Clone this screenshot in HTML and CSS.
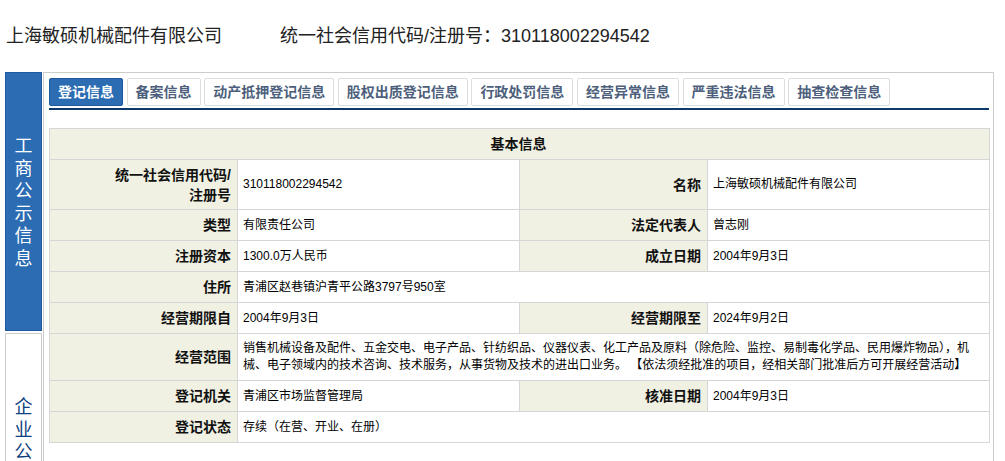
FILE: index.html
```html
<!DOCTYPE html>
<html lang="zh-CN">
<head>
  <meta charset="UTF-8">
  <title>企业信用信息公示</title>
  <link rel="stylesheet" href="styles.css">
</head>
<body>
  <header class="top">
    <span class="company">上海敏硕机械配件有限公司</span>
    <span class="credit">统一社会信用代码/注册号：310118002294542</span>
  </header>

  <div class="wrap">
    <!-- left side menu -->
    <aside class="side">
      <div class="side-item active">工<br>商<br>公<br>示<br>信<br>息</div>
      <div class="side-item">企<br>业<br>公<br>示<br>信<br>息</div>
    </aside>

    <main class="panel">
      <ul class="tabs">
        <li class="tab current">登记信息</li>
        <li class="tab">备案信息</li>
        <li class="tab">动产抵押登记信息</li>
        <li class="tab">股权出质登记信息</li>
        <li class="tab">行政处罚信息</li>
        <li class="tab">经营异常信息</li>
        <li class="tab">严重违法信息</li>
        <li class="tab">抽查检查信息</li>
      </ul>

      <table class="info">
        <colgroup>
          <col class="c-label"><col class="c-value"><col class="c-label"><col class="c-value">
        </colgroup>
        <tr><th colspan="4" class="caption">基本信息</th></tr>
        <tr class="tall">
          <th>统一社会信用代码/<br>注册号</th><td>310118002294542</td>
          <th>名称</th><td>上海敏硕机械配件有限公司</td>
        </tr>
        <tr>
          <th>类型</th><td>有限责任公司</td>
          <th>法定代表人</th><td>曾志刚</td>
        </tr>
        <tr>
          <th>注册资本</th><td>1300.0万人民币</td>
          <th>成立日期</th><td>2004年9月3日</td>
        </tr>
        <tr>
          <th>住所</th><td colspan="3">青浦区赵巷镇沪青平公路3797号950室</td>
        </tr>
        <tr>
          <th>经营期限自</th><td>2004年9月3日</td>
          <th>经营期限至</th><td>2024年9月2日</td>
        </tr>
        <tr class="scope">
          <th>经营范围</th>
          <td colspan="3">销售机械设备及配件、五金交电、电子产品、针纺织品、仪器仪表、化工产品及原料（除危险、监控、易制毒化学品、民用爆炸物品），机械、电子领域内的技术咨询、技术服务，从事货物及技术的进出口业务。 【依法须经批准的项目，经相关部门批准后方可开展经营活动】</td>
        </tr>
        <tr>
          <th>登记机关</th><td>青浦区市场监督管理局</td>
          <th>核准日期</th><td>2004年9月3日</td>
        </tr>
        <tr>
          <th>登记状态</th><td colspan="3">存续（在营、开业、在册）</td>
        </tr>
      </table>
    </main>
  </div>
</body>
</html>
```

FILE: styles.css
```css
/* page */
body {
  margin: 0;
  font-family: "Liberation Sans", "Noto Sans CJK SC", sans-serif;
  background: #fff;
  color: #000;
}

.top {
  height: 72px;
  display: flex;
  align-items: center;
  padding: 0 0 4px 6px;
  box-sizing: border-box;
  font-size: 18px;
  color: #222;
}

.credit {
  margin-left: 58px;
}

.wrap {
  display: flex;
  padding-left: 5px;
}

/* left menu */
.side {
  width: 37px;
  flex-shrink: 0;
  margin-right: 1px;
}

.side-item {
  height: 259px;
  box-sizing: border-box;
  border: 1px solid #ccc;
  display: flex;
  align-items: center;
  justify-content: center;
  text-align: center;
  font-size: 18px;
  line-height: 22.5px;
  color: #0f3f80;
  padding-top: 2px;
}

.side-item.active {
  background: #2b6cb2;
  border-color: #1f5a9c;
  color: #fff;
  margin-bottom: 2px;
}

/* right panel */
.panel {
  width: 951px;
  box-sizing: border-box;
  border: 1px solid #ccc;
  padding: 5px 4px 18px 5px;
}

.tabs {
  list-style: none;
  margin: 0 0 18px;
  padding: 0 0 2px;
  display: flex;
  gap: 3.6px;
  border-bottom: 2px solid #0d3a6b;
}

.tab {
  height: 28px;
  box-sizing: border-box;
  padding: 0 8px;
  border: 1px solid #ddd;
  border-radius: 2px;
  font-size: 14px;
  font-weight: bold;
  line-height: 26px;
  color: #4d5f7c;
  background: #fff;
}

.tab.current {
  background: #2b6cb2;
  border-color: #1f5a9c;
  color: #fff;
}

/* table */
.info {
  width: 940px;
  border-collapse: collapse;
  table-layout: fixed;
}

.c-label { width: 188px; }
.c-value { width: 282px; }

.info th,
.info td {
  border: 1px solid #d6d6d6;
  height: 30px;
}

.info th {
  background: #f1f1e3;
  font-size: 14px;
  font-weight: bold;
  text-align: right;
  padding: 0 6px 0 4px;
  line-height: 20px;
  color: #111;
}

.info th.caption {
  text-align: center;
}

.info td {
  font-size: 12px;
  line-height: 17px;
  padding: 0 5px 0 5px;
  color: #000;
}

.info tr.tall th,
.info tr.tall td {
  height: 49px;
}

.info tr.scope th,
.info tr.scope td {
  height: 46px;
}
```
